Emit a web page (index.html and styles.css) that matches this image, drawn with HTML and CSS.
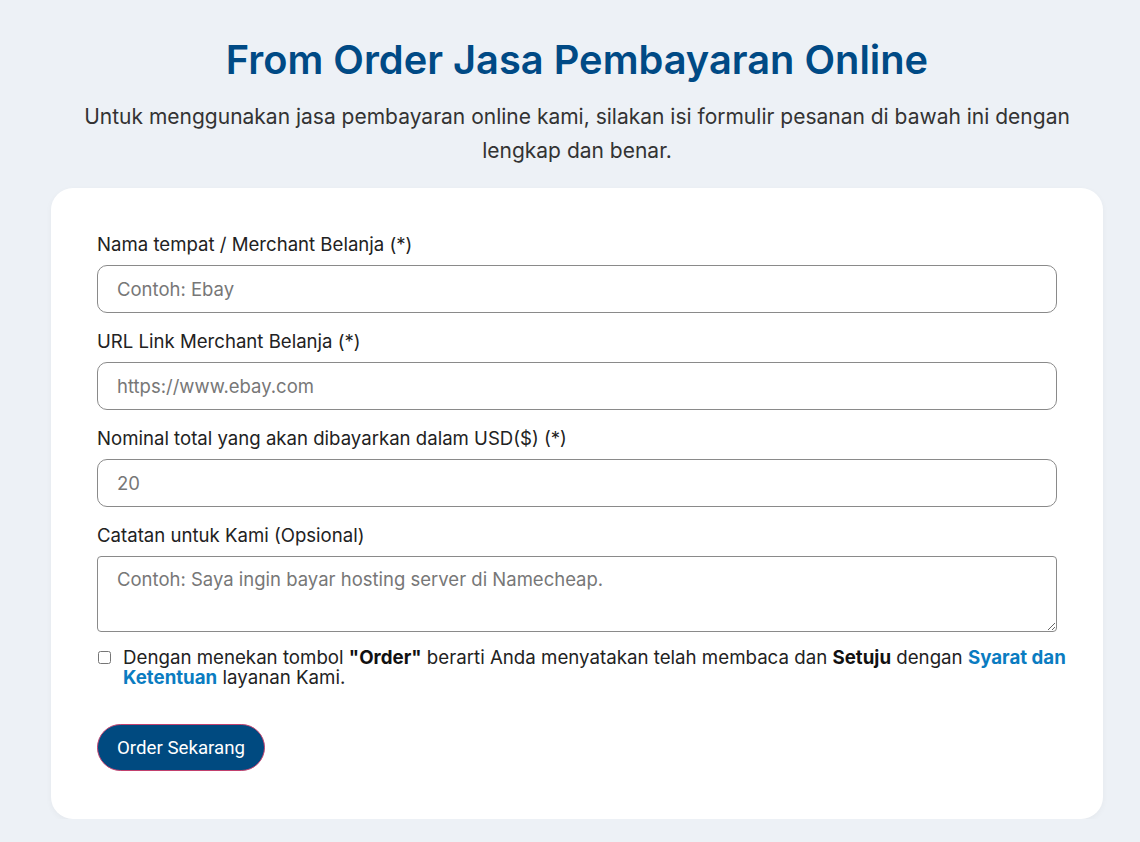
FILE: index.html
```html
<!DOCTYPE html>
<html lang="id">
<head>
    <meta charset="UTF-8">
    <meta name="viewport" content="width=device-width, initial-scale=1.0">
    <title>Form Order Jasa Pembayaran Online</title>
    <link rel="stylesheet" href="styles.css">
</head>
<body>
    <div class="page">
        <h1>From Order Jasa Pembayaran Online</h1>
        <p class="intro">Untuk menggunakan jasa pembayaran online kami, silakan isi formulir pesanan di bawah ini dengan lengkap dan benar.</p>

        <form class="card" onsubmit="return false;">
            <div class="form-group">
                <label for="merchant">Nama tempat / Merchant Belanja (*)</label>
                <input type="text" id="merchant" placeholder="Contoh: Ebay">
            </div>
            <div class="form-group">
                <label for="url">URL Link Merchant Belanja (*)</label>
                <input type="text" id="url" placeholder="https://www.ebay.com">
            </div>
            <div class="form-group">
                <label for="amount">Nominal total yang akan dibayarkan dalam USD($) (*)</label>
                <input type="text" id="amount" placeholder="20">
            </div>
            <div class="form-group">
                <label for="note">Catatan untuk Kami (Opsional)</label>
                <textarea id="note" placeholder="Contoh: Saya ingin bayar hosting server di Namecheap."></textarea>
            </div>
            <div class="agree">
                <input type="checkbox" id="agree">
                <label for="agree">Dengan menekan tombol <strong>"Order"</strong> berarti Anda menyatakan telah membaca dan <strong>Setuju</strong> dengan <a href="#">Syarat dan Ketentuan</a> layanan Kami.</label>
            </div>
            <button type="submit" class="order-btn">Order Sekarang</button>
        </form>
    </div>
</body>
</html>
```

FILE: styles.css
```css
body {
    font-family: Inter, "Noto Sans", sans-serif;
    background-color: #edf1f6;
    color: #222;
    margin: 0;
    padding: 0 0 0 14px;
}

.page {
    width: 1052px;
    margin: 0 auto;
    padding-top: 36px;
}

h1 {
    margin: 0;
    text-align: center;
    font-size: 39.8px;
    font-weight: 600;
    line-height: 48px;
    color: #004a85;
}

.intro {
    margin: 16px auto 20px;
    max-width: 1000px;
    text-align: center;
    font-size: 21px;
    line-height: 34px;
    color: #333;
}

.card {
    background-color: #fff;
    border-radius: 22px;
    padding: 44px 46px 48px;
    box-shadow: 0 2px 6px rgba(0, 0, 0, 0.04);
}

.form-group {
    margin-bottom: 16px;
}

.form-group label {
    display: block;
    font-size: 18.6px;
    line-height: 24px;
    margin-bottom: 9px;
    color: #222;
}

.form-group input,
.form-group textarea {
    display: block;
    box-sizing: border-box;
    width: 100%;
    height: 48px;
    padding: 0 19px;
    border: 1px solid #8a8a8a;
    border-radius: 10px;
    font-family: Inter, "Noto Sans", sans-serif;
    font-size: 18.5px;
    color: #222;
    background: #fff;
}

.form-group textarea {
    height: 76px;
    padding: 11px 19px;
    border-radius: 4px;
    resize: vertical;
}

input::placeholder,
textarea::placeholder {
    color: #777;
}

.agree {
    display: flex;
    align-items: flex-start;
    margin: 16px -18px 0 0;
    font-size: 18.7px;
    line-height: 19.5px;
    color: #222;
}

.agree input {
    margin: 3px 12px 0 1px;
    width: 13px;
    height: 13px;
    flex-shrink: 0;
}

.agree strong {
    color: #111;
}

.agree a {
    color: #0a7cc1;
    font-weight: bold;
    text-decoration: none;
}

.order-btn {
    margin-top: 37px;
    height: 47px;
    padding: 0 19px;
    background-color: #004a80;
    color: #fff;
    border: 1px solid #c2416e;
    border-radius: 24px;
    font-family: Roboto, sans-serif;
    font-size: 18.7px;
    cursor: pointer;
}

.order-btn:hover {
    background-color: #003a66;
}
```
